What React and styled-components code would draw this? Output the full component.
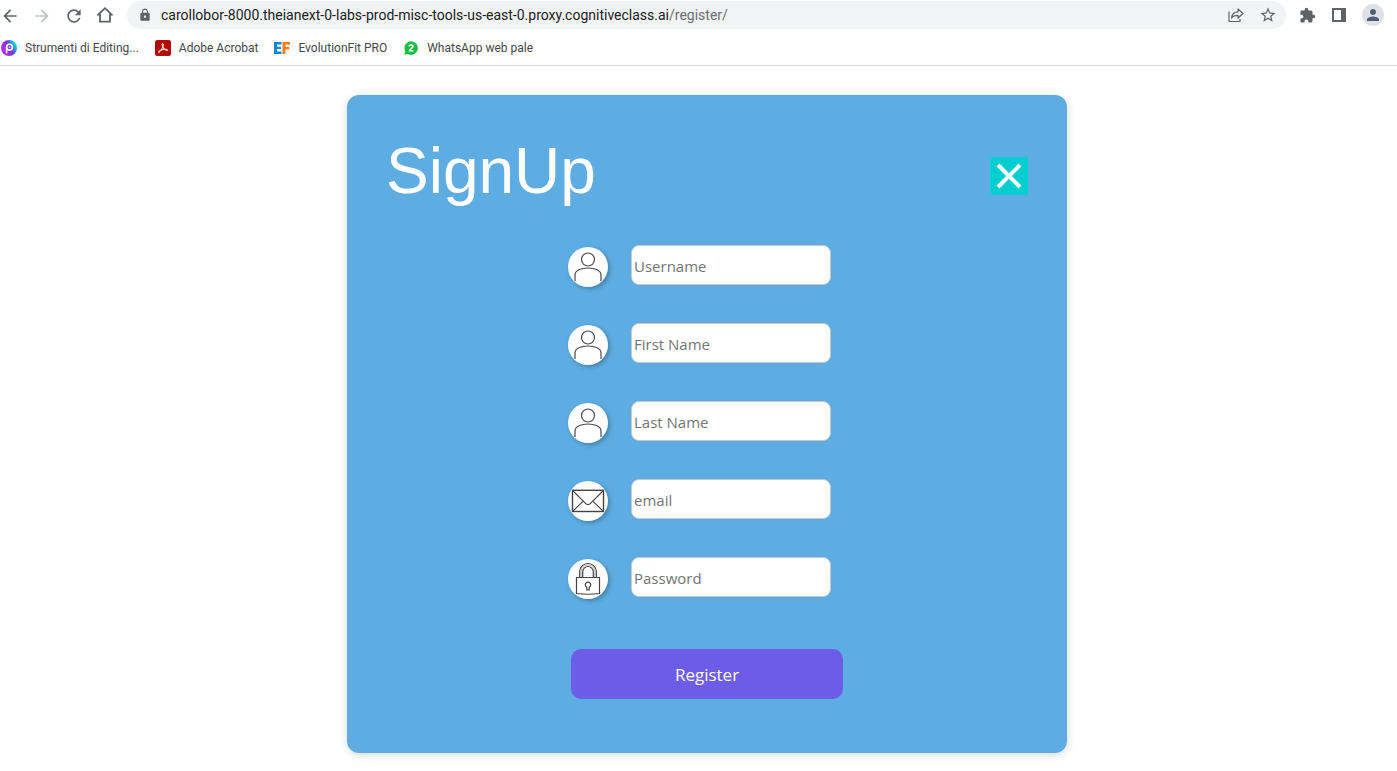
import React from "react";
import styled, { createGlobalStyle } from "styled-components";
import { MdExtension, MdLock, MdPerson, MdRefresh, MdStarBorder, MdArrowBack, MdArrowForward } from "react-icons/md";

const uiFont = `"Segoe UI", "Open Sans", "Noto Sans", sans-serif`;
const chromeFont = `"Segoe UI", Roboto, "Noto Sans", sans-serif`;

const GlobalStyle = createGlobalStyle`
  * { box-sizing: border-box; }
  body { margin: 0; background: #fff; font-family: ${uiFont}; }
`;

const BrowserBar = styled.header`
  border-bottom: 1px solid #d9dadc;
  font-family: ${chromeFont};
  color: #5f6368;
`;

const Toolbar = styled.div`
  display: flex;
  align-items: center;
  height: 30px;
  padding-right: 13px;
`;

const NavButtons = styled.nav`
  display: flex;
  gap: 14px;
  width: 127px;
`;

const IconButton = styled.button`
  display: grid;
  place-items: center;
  flex: none;
  width: 18px;
  height: 18px;
  padding: 0;
  border: 0;
  background: none;
  color: ${(p) => (p.$muted ? "#bdc1c6" : "#5f6368")};
`;

const AddressBox = styled.div`
  display: flex;
  align-items: center;
  flex: 1;
  height: 28px;
  padding: 0 9px 0 11px;
  border-radius: 14px;
  background: #f1f3f4;
`;

const Address = styled.div`
  flex: 1;
  margin-left: 9px;
  font-size: 14px;
  line-height: 20px;
  white-space: nowrap;
  color: #202124;
`;

const AddressPath = styled.span`
  color: #6a6e73;
`;

const AddressActions = styled.div`
  display: flex;
  gap: 14px;
`;

const BarActions = styled.div`
  display: flex;
  align-items: center;
  gap: 14px;
  margin-left: 12px;
`;

const Avatar = styled.button`
  display: grid;
  place-items: center;
  width: 22px;
  height: 22px;
  padding: 0;
  border: 0;
  border-radius: 50%;
  background: #dee1e6;
  color: #505b76;
`;

const Bookmarks = styled.nav`
  display: flex;
  gap: 16px;
  height: 35px;
  align-items: center;
  padding-left: 1px;
`;

const Bookmark = styled.a`
  display: flex;
  align-items: center;
  gap: 8px;
  font-size: 12px;
  line-height: 16px;
  white-space: nowrap;
  color: #45484c;
  text-decoration: none;
`;

const Page = styled.main`
  display: flex;
  justify-content: center;
  padding: 29px 0 18px 17px;
`;

const Card = styled.form`
  width: 100%;
  max-width: 720px;
  padding: 40px 39px 54px;
  border-radius: 12px;
  background: #5dade2;
  box-shadow: 0 2px 8px rgba(0, 0, 0, 0.15);
`;

const CardHeader = styled.div`
  display: flex;
  justify-content: space-between;
  align-items: center;
`;

const Title = styled.h1`
  margin: 0;
  font-family: "Liberation Sans", Arial, sans-serif;
  font-size: 64px;
  font-weight: 400;
  line-height: 72px;
  color: #fff;
`;

const CloseButton = styled.button`
  display: grid;
  place-items: center;
  width: 38px;
  height: 38px;
  margin-top: 10px;
  padding: 0;
  border: 0;
  border-radius: 0;
  background: #00ced1;
`;

const Fields = styled.div`
  display: flex;
  flex-direction: column;
  align-items: center;
  gap: 36px;
  margin-top: 38px;
  padding-right: 15px;
`;

const Field = styled.div`
  display: flex;
  gap: 23px;
  height: 42px;
`;

const FieldIcon = styled.label`
  align-self: flex-end;
  width: 40px;
  height: 40px;
  border-radius: 50%;
  background: #fff;
  box-shadow: 2px 2px 4px rgba(0, 0, 0, 0.25);
`;

const TextInput = styled.input`
  width: 200px;
  height: 40px;
  padding: 2px 2px 0;
  border: 1px solid #c8c8c8;
  border-radius: 8px;
  background: #fff;
  font-family: ${uiFont};
  font-size: 15px;
  color: #333;

  &::placeholder {
    color: #757575;
    opacity: 1;
  }
`;

const RegisterButton = styled.button`
  display: block;
  width: 272px;
  height: 50px;
  margin: 50px auto 0;
  padding: 2px 0 0;
  border: 0;
  border-radius: 10px;
  background: #6c5ce7;
  font-family: ${uiFont};
  font-size: 17px;
  line-height: 24px;
  color: #fff;
`;

const ShareIcon = () => (
  <svg width="18" height="18" viewBox="0 0 18 18" fill="none" stroke="currentColor" strokeWidth="1.2">
    <path d="M2 5.5V15.5H13V13" />
    <path d="M4.5 12C5 7.5 7.5 5.8 11 5.8V3L16 7.5L11 12V9.3C8 9.2 6 10 4.5 12Z" strokeLinejoin="round" />
  </svg>
);

const SidePanelIcon = () => (
  <svg width="18" height="18" viewBox="0 0 18 18">
    <path fill="currentColor" fillRule="evenodd" d="M2 2H16V16H2ZM4 4V14H11V4Z" />
  </svg>
);

const HomeIcon = () => (
  <svg width="18" height="18" viewBox="0 0 18 18" fill="none" stroke="currentColor" strokeWidth="1.8">
    <path d="M1.5 9.3L9 2.2L16.5 9.3M4 8V15.6H14V8" />
  </svg>
);

const ToolsLogo = () => (
  <svg width="16" height="16" viewBox="0 0 16 16" fill="none">
    <defs>
      <linearGradient id="tools" x1="3" y1="10" x2="14" y2="4" gradientUnits="userSpaceOnUse">
        <stop stopColor="#b32be8" />
        <stop offset="0.5" stopColor="#7634e8" />
        <stop offset="1" stopColor="#00d8e4" />
      </linearGradient>
    </defs>
    <circle cx="8" cy="8" r="8" fill="url(#tools)" />
    <circle cx="8.5" cy="7.2" r="2.9" stroke="#fff" strokeWidth="1.6" />
    <path d="M5.6 7V12.7" stroke="#fff" strokeWidth="1.6" strokeLinecap="round" />
    <circle cx="8.5" cy="7.2" r="0.8" fill="#fff" />
  </svg>
);

const AcrobatLogo = () => (
  <svg width="16" height="16" viewBox="0 0 16 16" fill="none">
    <rect width="16" height="16" rx="2.5" fill="#b30b00" />
    <path d="M7.7 3.5C6.8 3.5 7.2 6 8.4 8C9.5 9.8 12.5 11.3 12.7 10.2C12.9 8.8 8.2 9 5.6 10.2C3.7 11.1 3 12.2 3.7 12.5C4.9 12.8 8.8 6.2 8.4 4.1C8.3 3.7 8 3.5 7.7 3.5Z" stroke="#fff" strokeWidth="1" />
  </svg>
);

const EvolutionLogo = () => (
  <svg width="16" height="16" viewBox="0 0 16 16">
    <path fill="#0b87cf" d="M0 2H7.5V4.5H3V6.7H7V9.1H3V11.5H7.5V14H0Z" />
    <path fill="#ff7a12" d="M8.5 2H16V4.5H11.5V6.9H15.4V9.3H11.5V14H8.5Z" />
  </svg>
);

const WhatsAppLogo = () => (
  <svg width="16" height="16" viewBox="0 0 16 16">
    <path fill="#15bf42" d="M8.2 1.3A6.7 6.7 0 1 1 5 13.9L1.4 14.7L2.3 11.2A6.7 6.7 0 0 1 8.2 1.3Z" />
    <path d="M6.2 6.4C6.2 4.5 10 4.4 10 6.5C10 8 6.5 9.2 6.4 10.7H10.3" fill="none" stroke="#fff" strokeWidth="1.5" />
  </svg>
);

const PersonDrawing = () => (
  <svg width="40" height="40" viewBox="0 0 40 40" fill="none" stroke="#4a4a4a" strokeWidth="1.2">
    <circle cx="20" cy="12.5" r="6.5" />
    <path d="M7 34V28C7 23.5 13 21 20 21S33 23.5 33 28V34" />
  </svg>
);

const EnvelopeDrawing = () => (
  <svg width="40" height="40" viewBox="0 0 40 40" fill="none" stroke="#444">
    <rect x="4.5" y="9.3" width="31" height="21.2" strokeWidth="1.4" />
    <path d="M5 10L17.3 22.2Q20 25 22.7 22.2L35 10M5 30L15.2 20.2M35 30L24.8 20.2" strokeWidth="1.1" />
  </svg>
);

const PadlockDrawing = () => (
  <svg width="40" height="40" viewBox="0 0 40 40" fill="none" stroke="#444" strokeWidth="1.2">
    <path d="M8.5 18.5H31.5V34.5Q20 36 8.5 34.5Z" />
    <path d="M11.7 18V12.8A8.3 8.3 0 0 1 28.3 12.8V18M14.7 18V12.8A5.3 5.3 0 0 1 25.3 12.8V18" />
    <path d="M13.2 18V12.8A6.8 6.8 0 0 1 26.8 12.8V18" stroke="#999" strokeWidth="0.7" />
    <path d="M18.8 31V28.3A2.7 2.7 0 1 1 21.2 28.3V31Z" />
  </svg>
);

const bookmarks = [
  { label: "Strumenti di Editing...", Logo: ToolsLogo },
  { label: "Adobe Acrobat", Logo: AcrobatLogo },
  { label: "EvolutionFit PRO", Logo: EvolutionLogo },
  { label: "WhatsApp web pale", Logo: WhatsAppLogo },
];

const fields = [
  { id: "username", label: "Username", Drawing: PersonDrawing },
  { id: "firstname", label: "First Name", Drawing: PersonDrawing },
  { id: "lastname", label: "Last Name", Drawing: PersonDrawing },
  { id: "email", label: "email", type: "email", Drawing: EnvelopeDrawing },
  { id: "psw", label: "Password", type: "password", Drawing: PadlockDrawing },
];

export default function App() {
  return (
    <>
      <GlobalStyle />
      <BrowserBar>
        <Toolbar>
          <NavButtons aria-label="Browser">
            <IconButton aria-label="Back"><MdArrowBack size={20} /></IconButton>
            <IconButton aria-label="Forward" $muted><MdArrowForward size={20} /></IconButton>
            <IconButton aria-label="Reload"><MdRefresh size={20} /></IconButton>
            <IconButton aria-label="Home"><HomeIcon /></IconButton>
          </NavButtons>
          <AddressBox>
            <MdLock size={14} />
            <Address>
              carollobor-8000.theianext-0-labs-prod-misc-tools-us-east-0.proxy.cognitiveclass.ai
              <AddressPath>/register/</AddressPath>
            </Address>
            <AddressActions>
              <IconButton aria-label="Share"><ShareIcon /></IconButton>
              <IconButton aria-label="Bookmark this page"><MdStarBorder size={18} /></IconButton>
            </AddressActions>
          </AddressBox>
          <BarActions>
            <IconButton aria-label="Extensions"><MdExtension size={17} /></IconButton>
            <IconButton aria-label="Side panel"><SidePanelIcon /></IconButton>
            <Avatar aria-label="Profile"><MdPerson size={18} /></Avatar>
          </BarActions>
        </Toolbar>
        <Bookmarks aria-label="Bookmarks">
          {bookmarks.map(({ label, Logo }) => (
            <Bookmark key={label} href="#"><Logo />{label}</Bookmark>
          ))}
        </Bookmarks>
      </BrowserBar>
      <Page>
        <Card onSubmit={(e) => e.preventDefault()}>
          <CardHeader>
            <Title>SignUp</Title>
            <CloseButton type="button" aria-label="Close">
              <svg width="26" height="26" viewBox="0 0 26 26" stroke="#fff" strokeWidth="4">
                <path d="M2 2L24 24M24 2L2 24" />
              </svg>
            </CloseButton>
          </CardHeader>
          <Fields>
            {fields.map(({ id, label, type = "text", Drawing }) => (
              <Field key={id}>
                <FieldIcon htmlFor={id} aria-label={label}><Drawing /></FieldIcon>
                <TextInput id={id} name={id} type={type} placeholder={label} />
              </Field>
            ))}
          </Fields>
          <RegisterButton type="submit">Register</RegisterButton>
        </Card>
      </Page>
    </>
  );
}
